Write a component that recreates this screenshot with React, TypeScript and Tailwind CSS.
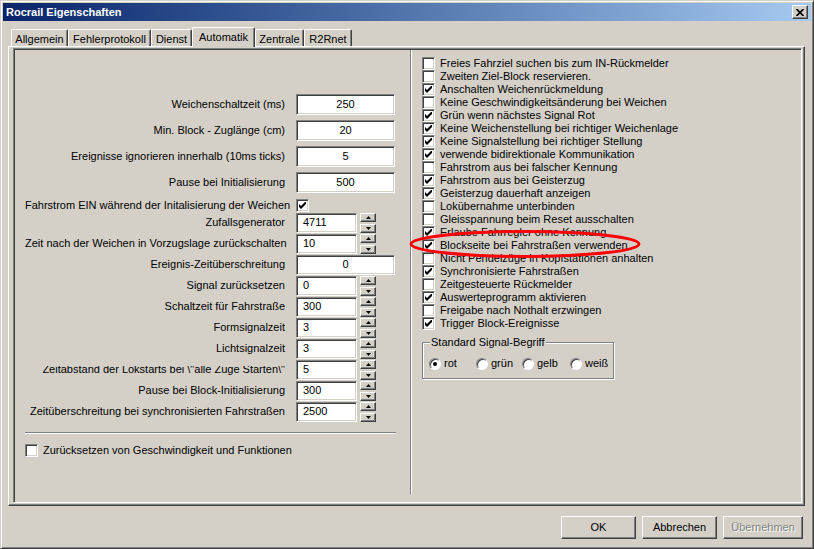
import React from "react";

const sunken =
  "border border-t-[#808080] border-l-[#808080] border-r-white border-b-white shadow-[inset_1px_1px_0_#404040,inset_-1px_-1px_0_#d4d0c8]";
const raised =
  "border border-t-white border-l-white border-r-[#404040] border-b-[#404040] shadow-[inset_-1px_-1px_0_#808080]";

function Check({ on }: { on?: boolean }) {
  return (
    <span className={`w-[13px] h-[13px] shrink-0 bg-white flex items-center justify-center ${sunken}`}>
      {on && (
        <svg width="7" height="7" viewBox="0 0 7 7">
          <path d="M0 2 L2 4 L7 -1 L7 2 L2 7 L0 5 Z" fill="black" />
        </svg>
      )}
    </span>
  );
}

function Radio({ on }: { on?: boolean }) {
  return (
    <span className="w-[12px] h-[12px] shrink-0 rounded-full bg-white border border-t-[#808080] border-l-[#808080] border-r-white border-b-white shadow-[inset_1px_1px_0_#404040] flex items-center justify-center">
      {on && <span className="w-[4px] h-[4px] rounded-full bg-black" />}
    </span>
  );
}

function SpinBtn({ up }: { up?: boolean }) {
  return (
    <div className={`w-[16px] h-[9px] bg-[#d4d0c8] flex items-center justify-center ${raised}`}>
      <svg width="5" height="3" viewBox="0 0 5 3">
        {up ? <polygon points="0,3 2.5,0 5,3" fill="black" /> : <polygon points="0,0 2.5,3 5,0" fill="black" />}
      </svg>
    </div>
  );
}

function Spin({ value }: { value: string }) {
  return (
    <div className="flex items-start gap-[3px]">
      <div className={`w-[61px] h-[20px] bg-white pl-[6px] flex items-center ${sunken}`}>{value}</div>
      <div className="flex flex-col gap-[2px]">
        <SpinBtn up />
        <SpinBtn />
      </div>
    </div>
  );
}

function Field({ value, h = "h-[21px]" }: { value: string; h?: string }) {
  return (
    <div className={`w-[99px] ${h} bg-white flex items-center justify-center ${sunken}`}>{value}</div>
  );
}

function Row({ label, children, clip }: { label: string; children: React.ReactNode; clip?: boolean }) {
  return (
    <div className="flex items-center h-[21px]">
      <div className="w-[260px] text-right whitespace-nowrap">
        <span className={clip ? "[clip-path:inset(3px_0_0_0)]" : ""}>{label}</span>
      </div>
      <div className="ml-[11px]">{children}</div>
    </div>
  );
}

const topRows = [
  ["Weichenschaltzeit (ms)", "250"],
  ["Min. Block - Zuglänge (cm)", "20"],
  ["Ereignisse ignorieren innerhalb (10ms ticks)", "5"],
  ["Pause bei Initialisierung", "500"],
];

const spinRows: [string, string, boolean?][] = [
  ["Zufallsgenerator", "4711"],
  ["Zeit nach der Weichen in Vorzugslage zurückschalten", "10"],
  ["Ereignis-Zeitüberschreitung", "0", true],
  ["Signal zurücksetzen", "0"],
  ["Schaltzeit für Fahrstraße", "300"],
  ["Formsignalzeit", "3"],
  ["Lichtsignalzeit", "3"],
  ['Zeitabstand der Lokstarts bei \\"alle Züge Starten\\"', "5"],
  ["Pause bei Block-Initialisierung", "300"],
  ["Zeitüberschreitung bei synchronisierten Fahrstraßen", "2500"],
];

const options: [string, boolean][] = [
  ["Freies Fahrziel suchen bis zum IN-Rückmelder", false],
  ["Zweiten Ziel-Block reservieren.", false],
  ["Anschalten Weichenrückmeldung", true],
  ["Keine Geschwindigkeitsänderung bei Weichen", false],
  ["Grün wenn nächstes Signal Rot", true],
  ["Keine Weichenstellung bei richtiger Weichenlage", true],
  ["Keine Signalstellung bei richtiger Stellung", true],
  ["verwende bidirektionale Kommunikation", true],
  ["Fahrstrom aus bei falscher Kennung", false],
  ["Fahrstrom aus bei Geisterzug", true],
  ["Geisterzug dauerhaft anzeigen", true],
  ["Lokübernahme unterbinden", false],
  ["Gleisspannung beim Reset ausschalten", false],
  ["Erlaube Fahrregler ohne Kennung", true],
  ["Blockseite bei Fahrstraßen verwenden", true],
  ["Nicht Pendelzüge in Kopfstationen anhalten", false],
  ["Synchronisierte Fahrstraßen", true],
  ["Zeitgesteuerte Rückmelder", false],
  ["Auswerteprogramm aktivieren", true],
  ["Freigabe nach Nothalt erzwingen", false],
  ["Trigger Block-Ereignisse", true],
];

const tabs = [
  { name: "Allgemein", w: "w-[57px]" },
  { name: "Fehlerprotokoll", w: "w-[83px]" },
  { name: "Dienst", w: "w-[41px]" },
  { name: "Automatik", w: "w-[63px]", active: true },
  { name: "Zentrale", w: "w-[49px]" },
  { name: "R2Rnet", w: "w-[48px]" },
];

export default function App() {
  return (
    <div className="relative w-[814px] h-[549px] bg-[#d4d0c8] border border-t-[#d4d0c8] border-l-[#d4d0c8] border-r-[#404040] border-b-[#404040] shadow-[inset_1px_1px_0_white,inset_-1px_-1px_0_#808080] p-[2px] flex flex-col font-['Liberation_Sans',Arial,sans-serif] text-[11px] leading-[13px] text-black overflow-hidden">
      {/* title bar */}
      <div className="h-[18px] shrink-0 bg-linear-to-r from-[#0a246a] to-[#a6caf0] flex items-center justify-between pl-[3px] pr-[3px]">
        <span className="text-white font-bold">Rocrail Eigenschaften</span>
        <div className={`w-[16px] h-[14px] bg-[#d4d0c8] flex items-center justify-center ${raised}`}>
          <svg width="8" height="7" viewBox="0 0 8 7">
            <path d="M0.5 0 L7.5 7 M7.5 0 L0.5 7" stroke="black" strokeWidth="1.7" />
          </svg>
        </div>
      </div>

      {/* tabs */}
      <div className="relative z-10 h-[25px] shrink-0 flex items-end pl-[8px]">
        {tabs.map((t) =>
          t.active ? (
            <div
              key={t.name}
              className={`${t.w} h-[20px] -mb-[1px] bg-[#d4d0c8] border-l border-t border-r border-l-white border-t-white border-r-[#404040] shadow-[inset_-1px_0_0_#808080] rounded-t-[2px] flex items-center justify-center pb-[1px]`}
            >
              {t.name}
            </div>
          ) : (
            <div
              key={t.name}
              className={`${t.w} h-[17px] border-l border-t border-r border-l-white border-t-white border-r-[#404040] shadow-[inset_-1px_0_0_#808080] rounded-t-[2px] flex items-center justify-center pt-[3px]`}
            >
              {t.name}
            </div>
          )
        )}
      </div>

      {/* tab page */}
      <div className="ml-[5px] w-[797px] h-[460px] shrink-0 border border-t-white border-l-white border-r-[#404040] border-b-[#404040] shadow-[inset_-1px_-1px_0_#808080] pl-[4px] pt-[1px] pr-[2px] pb-[2px]">
        <div className={`w-full h-full flex ${sunken}`}>
          {/* left column */}
          <div className="w-[396px] shrink-0 pl-[11px] pt-[45px] flex flex-col">
            <div className="flex flex-col gap-[5px]">
              {topRows.map(([l, v]) => (
                <Row key={l} label={l}>
                  <Field value={v} />
                </Row>
              ))}
            </div>
            <div className="mt-[6px] h-[13px] flex items-center">
              <div className="w-[260px] text-right whitespace-nowrap">
                Fahrstrom EIN während der Initalisierung der Weichen
              </div>
              <div className="ml-[11px]">
                <Check on />
              </div>
            </div>
            {spinRows.map(([l, v, full]) => (
              <Row key={l} label={l} clip={l.startsWith("Zeitabstand")}>
                {full ? <Field value={v} h="h-[20px]" /> : <Spin value={v} />}
              </Row>
            ))}
            <div className="mt-[10px] w-[371px] h-[2px] border-t border-b border-t-[#808080] border-b-white" />
            <div className="mt-[10px] h-[13px] flex items-center gap-[5px]">
              <Check />
              <span>Zurücksetzen von Geschwindigkeit und Funktionen</span>
            </div>
          </div>

          {/* separator */}
          <div className="mt-[1px] w-[2px] h-[444px] shrink-0 border-l border-r border-l-[#808080] border-r-white" />

          {/* right column */}
          <div className="flex-1 pl-[10px] pt-[8px] flex flex-col">
            {options.map(([t, on]) => (
              <div key={t} className="h-[13px] flex items-center gap-[5px]">
                <Check on={on} />
                <span className="whitespace-nowrap">{t}</span>
              </div>
            ))}
            <div className="relative mt-[12px] w-[192px] h-[37px] border border-[#808080] shadow-[inset_1px_1px_0_white,1px_1px_0_white]">
              <span className="absolute left-[7px] -top-[7px] px-[1px] bg-[#d4d0c8] whitespace-nowrap">
                Standard Signal-Begriff
              </span>
              <div className="flex items-center pl-[6px] pt-[14px]">
                <div className="w-[47px] flex items-center gap-[3px]">
                  <Radio on />
                  <span>rot</span>
                </div>
                <div className="w-[46px] flex items-center gap-[3px]">
                  <Radio />
                  <span>grün</span>
                </div>
                <div className="w-[48px] flex items-center gap-[3px]">
                  <Radio />
                  <span>gelb</span>
                </div>
                <div className="flex items-center gap-[3px]">
                  <Radio />
                  <span>weiß</span>
                </div>
              </div>
            </div>
          </div>
        </div>
      </div>

      {/* buttons */}
      <div className="mt-[10px] flex justify-end gap-[6px] pr-[8px]">
        <div className={`w-[75px] h-[23px] flex items-center justify-center ${raised}`}>OK</div>
        <div className={`w-[75px] h-[23px] flex items-center justify-center ${raised}`}>Abbrechen</div>
        <div className={`w-[80px] h-[23px] flex items-center justify-center text-[#808080] [text-shadow:1px_1px_0_white] ${raised}`}>
          Übernehmen
        </div>
      </div>

      {/* red annotation ellipse */}
      <svg className="absolute left-[408px] top-[229px] pointer-events-none" width="232" height="28" viewBox="0 0 232 28">
        <ellipse cx="116" cy="14" rx="114" ry="12.5" fill="none" stroke="#ff0000" strokeWidth="3" />
      </svg>
    </div>
  );
}
